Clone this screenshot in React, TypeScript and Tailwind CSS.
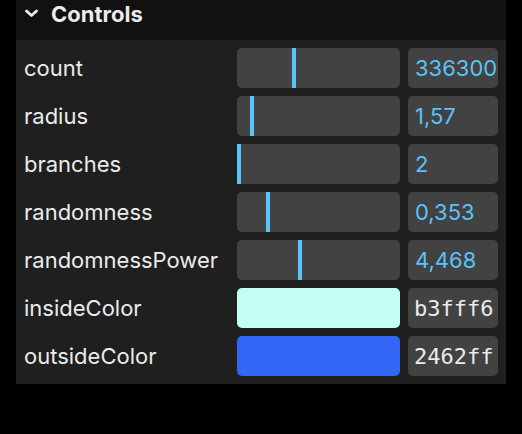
type Row =
  | { kind: 'number'; label: string; value: string; pct: number }
  | { kind: 'color'; label: string; hex: string; swatch: string };

const rows: Row[] = [
  { kind: 'number', label: 'count', value: '336300', pct: 33.5 },
  { kind: 'number', label: 'radius', value: '1,57', pct: 8.2 },
  { kind: 'number', label: 'branches', value: '2', pct: 0 },
  { kind: 'number', label: 'randomness', value: '0,353', pct: 17.5 },
  { kind: 'number', label: 'randomnessPower', value: '4,468', pct: 37.5 },
  { kind: 'color', label: 'insideColor', hex: 'b3fff6', swatch: '#c4fff6' },
  { kind: 'color', label: 'outsideColor', hex: '2462ff', swatch: '#3366f5' },
];

export default function App() {
  return (
    <div className="h-[434px] w-[522px] bg-black font-['Inter',sans-serif] text-[22px] text-[#ebebeb]">
      <div className="ml-4 w-[490px] bg-[#1f1f1f]">
        <div className="flex h-10 items-start gap-[13px] bg-[#111111] pl-[9px]">
          <svg width="13" height="29" viewBox="0 0 13 29" className="shrink-0">
            <path d="M1.5 11 L6.5 15.5 L11.5 11" fill="none" stroke="#ebebeb" strokeWidth="2.8" strokeLinecap="round" strokeLinejoin="round" />
          </svg>
          <span className="font-bold leading-[29px]">Controls</span>
        </div>
        <div className="flex flex-col gap-2 p-2">
          {rows.map((r) => (
            <div key={r.label} className="flex h-10 items-center">
              <span className="w-[213px] shrink-0 leading-none">{r.label}</span>
              {r.kind === 'number' ? (
                <>
                  <div className="relative h-10 w-[163px] shrink-0 rounded-[5px] bg-[#424242]">
                    <div
                      className="absolute top-0 h-10 w-[4px] bg-[#5ac3f8]"
                      style={{ left: `${r.pct}%` }}
                    />
                  </div>
                  <div className="ml-2 flex h-10 w-[90px] shrink-0 items-center overflow-hidden rounded-[5px] bg-[#424242] pl-[7px] text-[#5ac3f8]">
                    {r.value}
                  </div>
                </>
              ) : (
                <>
                  <div
                    className="h-10 w-[163px] shrink-0 rounded-[5px]"
                    style={{ backgroundColor: r.swatch }}
                  />
                  <div className="ml-2 flex h-10 w-[90px] shrink-0 items-center overflow-hidden rounded-[5px] bg-[#424242] pl-[6px] font-['DejaVu_Sans_Mono',monospace] text-[22px]">
                    {r.hex}
                  </div>
                </>
              )}
            </div>
          ))}
        </div>
      </div>
    </div>
  );
}
